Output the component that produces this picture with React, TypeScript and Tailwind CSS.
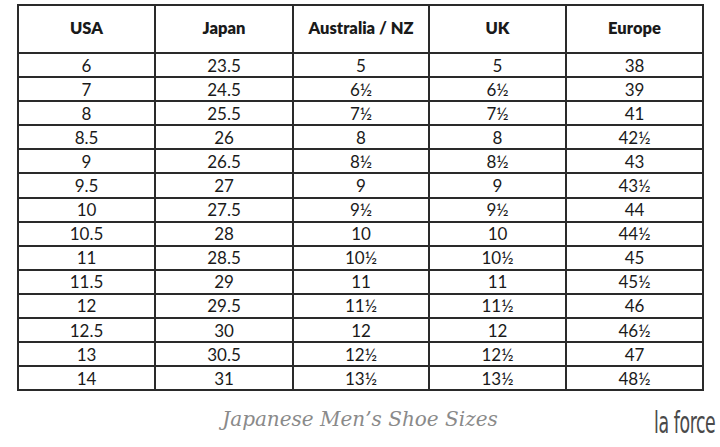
const rows: [string, string, string, string, string][] = [
  ["6", "23.5", "5", "5", "38"],
  ["7", "24.5", "6½", "6½", "39"],
  ["8", "25.5", "7½", "7½", "41"],
  ["8.5", "26", "8", "8", "42½"],
  ["9", "26.5", "8½", "8½", "43"],
  ["9.5", "27", "9", "9", "43½"],
  ["10", "27.5", "9½", "9½", "44"],
  ["10.5", "28", "10", "10", "44½"],
  ["11", "28.5", "10½", "10½", "45"],
  ["11.5", "29", "11", "11", "45½"],
  ["12", "29.5", "11½", "11½", "46"],
  ["12.5", "30", "12", "12", "46½"],
  ["13", "30.5", "12½", "12½", "47"],
  ["14", "31", "13½", "13½", "48½"],
];

const headers = ["USA", "Japan", "Australia / NZ", "UK", "Europe"];

export default function App() {
  return (
    <div className="w-[720px] h-[447px] bg-white overflow-hidden pt-[4px]" style={{ fontFamily: "Lato, 'Open Sans', sans-serif" }}>
      <table className="ml-[17px] w-[685px] table-fixed border-collapse text-[#1a1a1a]">
        <colgroup>
          <col className="w-[137px]" />
          <col className="w-[138px]" />
          <col className="w-[136px]" />
          <col className="w-[137px]" />
          <col className="w-[137px]" />
        </colgroup>
        <thead>
          <tr className="h-[48px]">
            {headers.map((h) => (
              <th key={h} className="border-2 border-[#2a2a2a] text-[16.5px] font-extrabold text-center align-middle pb-[1px]">
                {h}
              </th>
            ))}
          </tr>
        </thead>
        <tbody>
          {rows.map((r) => (
            <tr key={r[0]} className="h-[24.1px]">
              {r.map((c, i) => (
                <td key={i} className="border-2 border-[#2a2a2a] text-[17px] leading-none text-center align-middle">
                  {c}
                </td>
              ))}
            </tr>
          ))}
        </tbody>
      </table>
      <div className="grid grid-cols-[1fr_auto_1fr] items-center mt-[8px] px-[5px]">
        <div />
        <div className="text-[20px] italic text-[#8a8a8a]" style={{ fontFamily: "'DejaVu Serif', 'Liberation Serif', serif" }}>
          Japanese Men’s Shoe Sizes
        </div>
        <div className="flex justify-end">
          <span className="text-[31px] leading-none text-[#4a4a4a] inline-block origin-right scale-x-[0.56] tracking-tight mt-[8px]" style={{ fontFamily: "'DejaVu Sans', sans-serif" }}>
            la force
          </span>
        </div>
      </div>
    </div>
  );
}
